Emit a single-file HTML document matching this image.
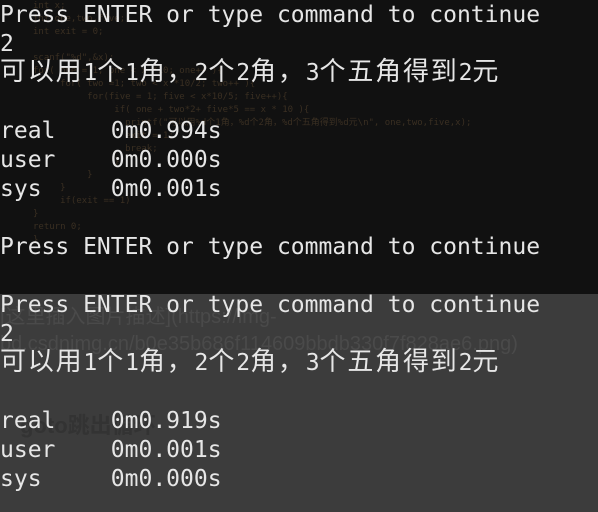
<!DOCTYPE html>
<html><head><meta charset="utf-8"><style>
html,body{margin:0;padding:0;}
body{width:598px;height:512px;overflow:hidden;position:relative;background:#111;}
.bot{position:absolute;left:0;top:294px;width:598px;height:218px;background:#3c3c3c;}
.code{position:absolute;font-family:"DejaVu Sans Mono","Noto Sans CJK SC",monospace;font-size:9px;line-height:13px;color:#3a2f22;white-space:pre;left:33px;top:0;}
.faint{position:absolute;font-family:"Liberation Sans","Noto Sans CJK SC",sans-serif;font-size:20px;color:#4a4a4a;white-space:pre;}
pre{position:absolute;left:0;top:1px;margin:0;font-family:"DejaVu Sans Mono","Noto Sans CJK SC",monospace;font-size:23px;line-height:29px;color:#e6e6e6;white-space:pre;}
.c{font-size:26px;letter-spacing:1.8px;line-height:20px;}
</style></head><body>
<div class="code">int x;
int one,two,five;
int exit = 0;

scanf("%d",&x);
for( one = 1; one < x *10; one++ ){
     for( two =1; two < x *10/2; two++ ){
          for(five = 1; five < x*10/5; five++){
               if( one + two*2+ five*5 == x * 10 ){
                 printf("可以用%d个1角，%d个2角，%d个五角得到%d元\n", one,two,five,x);
                 exit = 1;
                 break;
               }
          }
     }
     if(exit == 1)
}
return 0;
}</div>
<div class="bot"></div>
<div class="faint" style="left:0;top:300px;">[这里插入图片描述](https://img-</div>
<div class="faint" style="left:0;top:333px;">bd.csdnimg.cn/b0e35b686f114609bbdb330f7f828ae6.png)</div>
<div class="faint" style="left:20px;top:408px;font-weight:bold;color:#333;font-size:22px;">goto跳出循环</div>
<pre>Press ENTER or type command to continue
2
<span class="c">可以用</span>1<span class="c">个</span>1<span class="c">角，</span>2<span class="c">个</span>2<span class="c">角，</span>3<span class="c">个五角得到</span>2<span class="c">元</span>

real	0m0.994s
user	0m0.000s
sys	0m0.001s

Press ENTER or type command to continue

Press ENTER or type command to continue
2
<span class="c">可以用</span>1<span class="c">个</span>1<span class="c">角，</span>2<span class="c">个</span>2<span class="c">角，</span>3<span class="c">个五角得到</span>2<span class="c">元</span>

real	0m0.919s
user	0m0.001s
sys	0m0.000s</pre>
</body></html>
